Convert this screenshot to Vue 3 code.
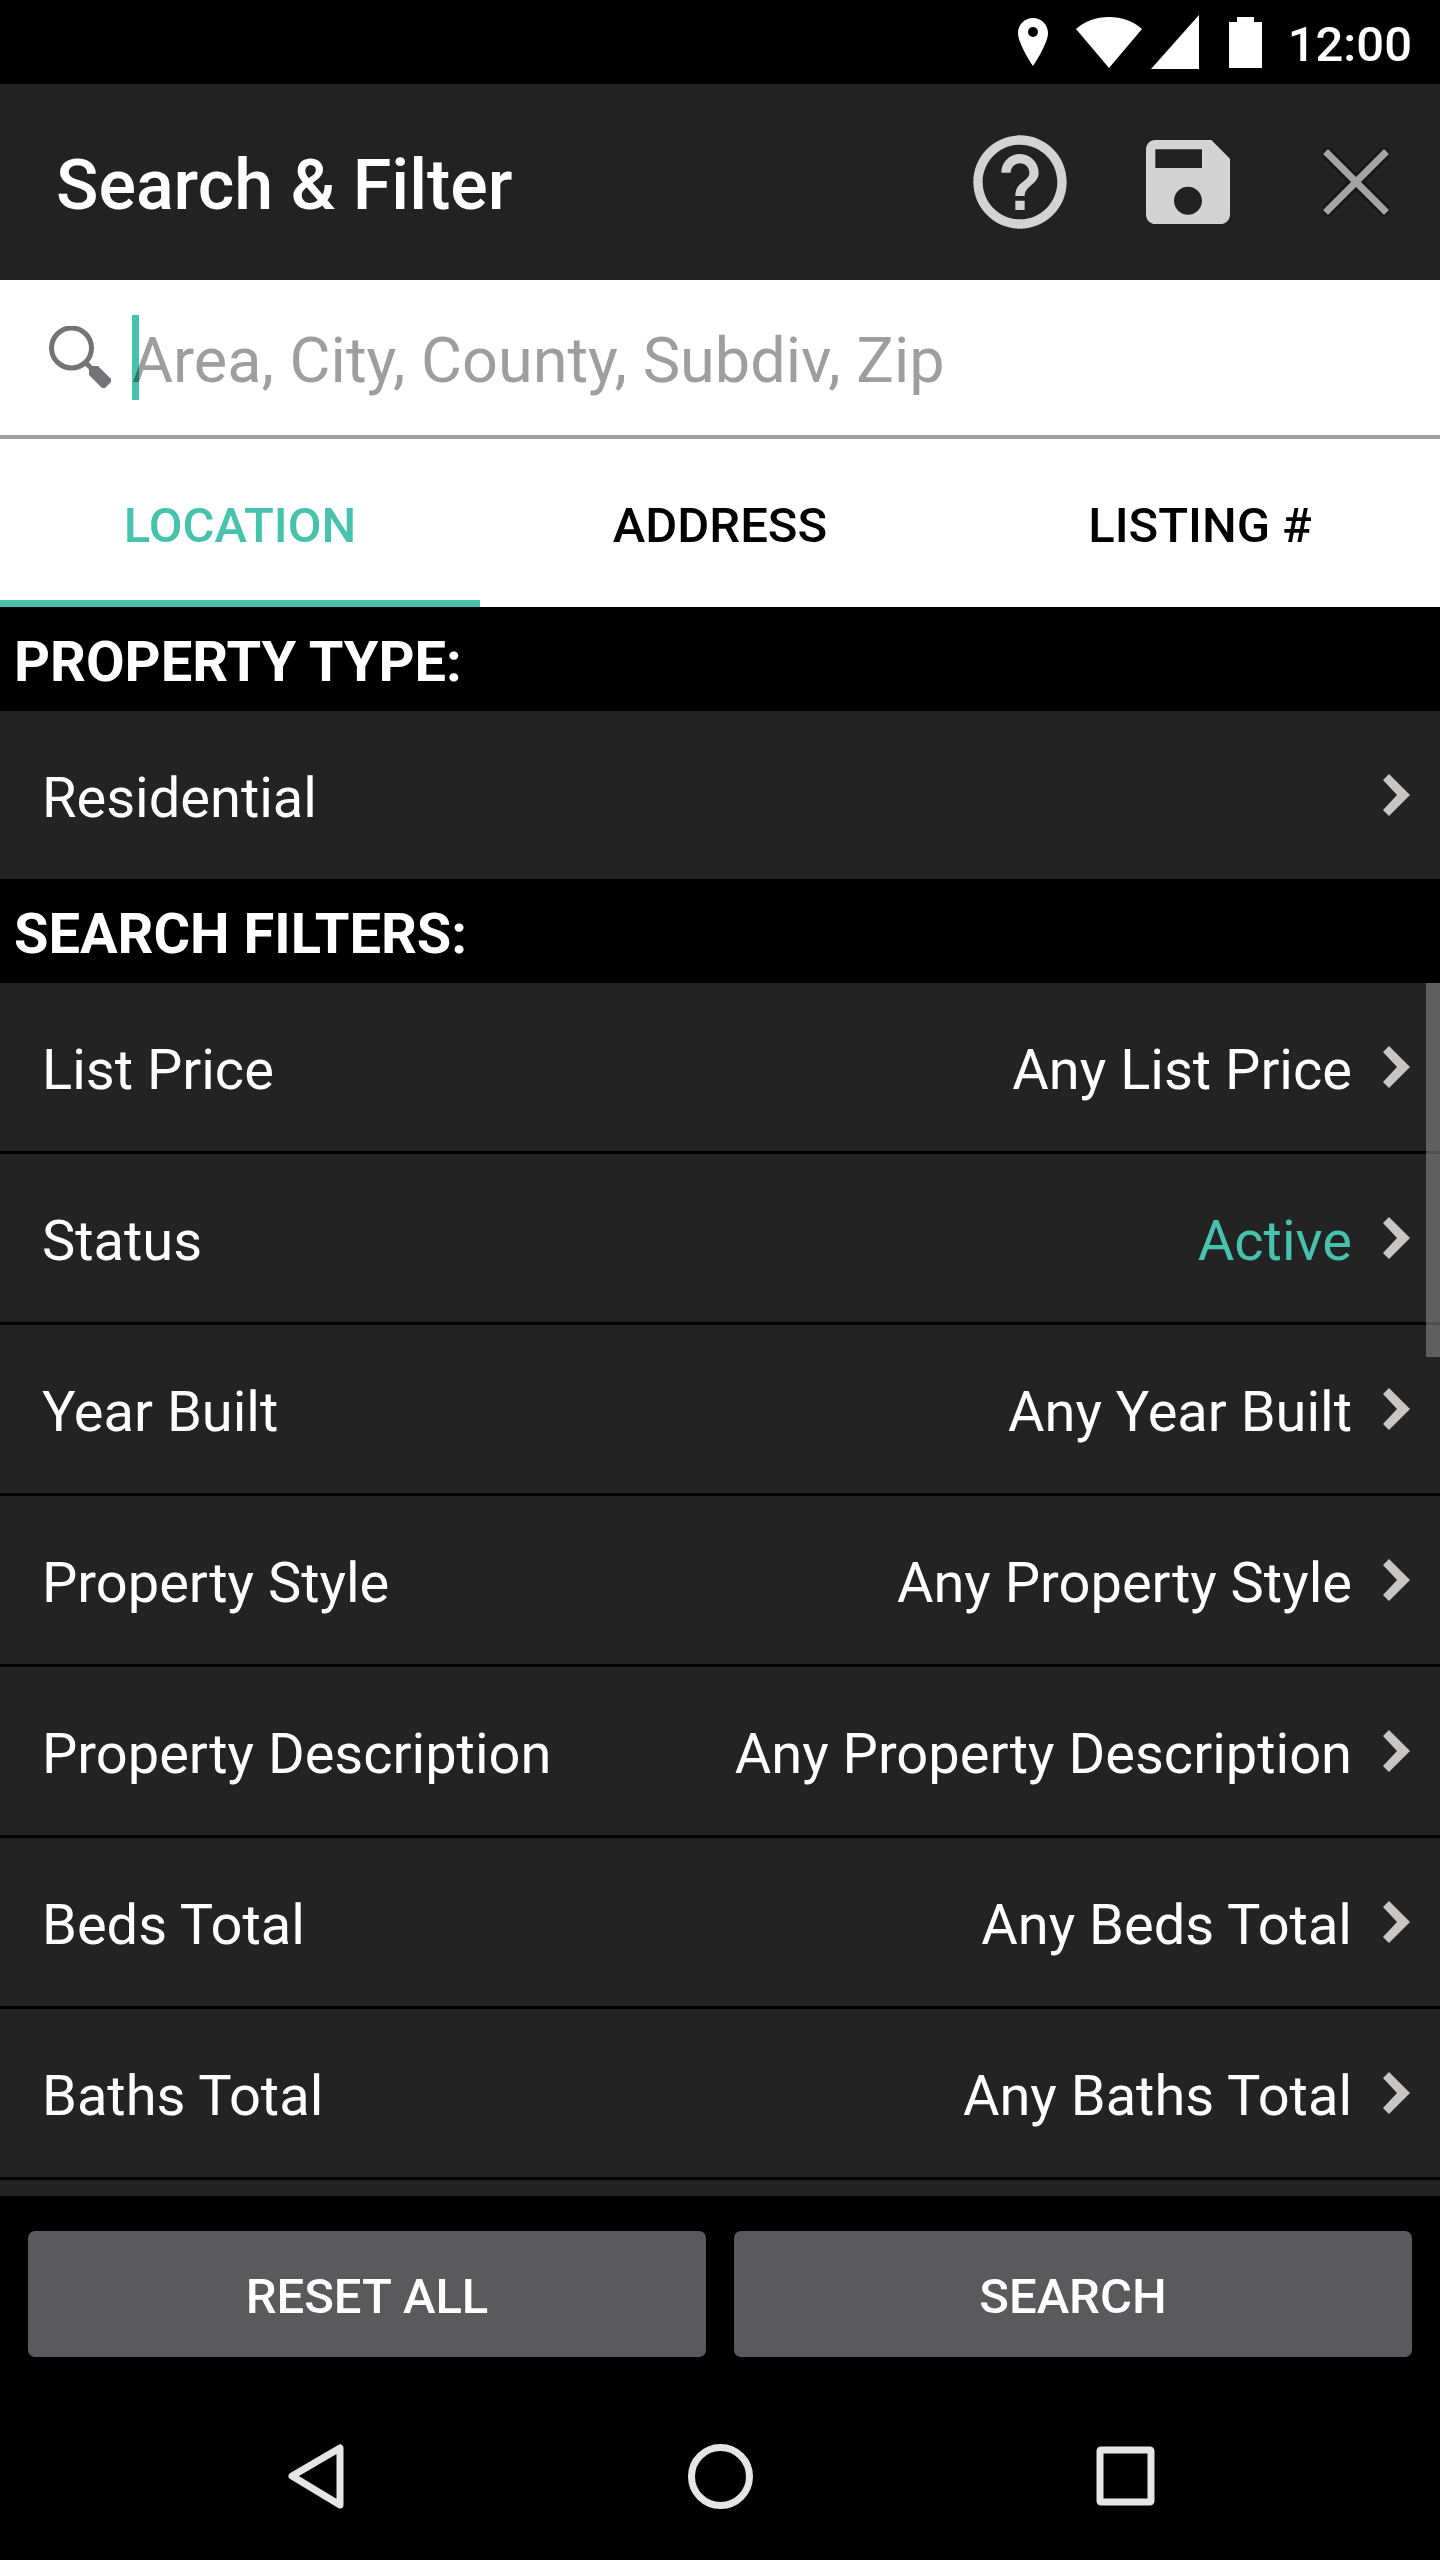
<script setup>
import { ref } from 'vue'

const query = ref('')
const tabs = ['LOCATION', 'ADDRESS', 'LISTING #']
const activeTab = ref('LOCATION')
const filters = [
  { label: 'List Price', value: 'Any List Price' },
  { label: 'Status', value: 'Active', set: true },
  { label: 'Year Built', value: 'Any Year Built' },
  { label: 'Property Style', value: 'Any Property Style' },
  { label: 'Property Description', value: 'Any Property Description' },
  { label: 'Beds Total', value: 'Any Beds Total' },
  { label: 'Baths Total', value: 'Any Baths Total' }
]
</script>

<template>
  <div class="screen">
    <div class="status-bar">
      <svg class="pin" width="30" height="48" viewBox="0 0 30 48">
        <path fill-rule="evenodd" d="M15 0C6.700 0 0 6.700 0 15c0 11 15 33 15 33s15-22 15-33C30 6.700 23.300 0 15 0zm0 9a5 5 0 1 1 0 10 5 5 0 0 1 0-10z" />
      </svg>
      <svg class="wifi" width="66" height="51" viewBox="0 0 66 51">
        <path d="M33 51 0 12C9 4 20 0 33 0s24 4 33 12z" />
      </svg>
      <svg class="signal" width="48" height="54" viewBox="0 0 48 54">
        <path d="M48 0v54H0z" />
      </svg>
      <svg class="battery" width="33" height="51" viewBox="0 0 33 51">
        <path d="M8 0h17v5h8v46H0V5h8z" />
      </svg>
      <time class="clock">12:00</time>
    </div>

    <header class="toolbar">
      <h1 class="title">Search &amp; Filter</h1>
      <button class="tool" type="button" aria-label="Help">
        <svg width="112" height="112" viewBox="0 0 24 24" fill="#d3d3d3">
          <path d="M11 18h2v-2h-2v2zm1-16C6.480 2 2 6.480 2 12s4.480 10 10 10 10-4.480 10-10S17.520 2 12 2zm0 18c-4.410 0-8-3.590-8-8s3.590-8 8-8 8 3.590 8 8-3.590 8-8 8zm0-14c-2.210 0-4 1.790-4 4h2c0-1.100.9-2 2-2s2 .9 2 2c0 2-3 1.750-3 5h2c0-2.250 3-2.500 3-5 0-2.210-1.790-4-4-4z" />
        </svg>
      </button>
      <button class="tool" type="button" aria-label="Save search">
        <svg width="112" height="112" viewBox="0 0 24 24" fill="#d3d3d3">
          <path d="M17 3H5c-1.110 0-2 .9-2 2v14c0 1.100.89 2 2 2h14c1.100 0 2-.9 2-2V7l-4-4zm-5 16c-1.660 0-3-1.340-3-3s1.340-3 3-3 3 1.340 3 3-1.340 3-3 3zm3-10H5V5h10v4z" />
        </svg>
      </button>
      <button class="tool" type="button" aria-label="Close">
        <svg width="112" height="112" viewBox="0 0 112 112" fill="none">
          <path d="M28 28l56 56M84 28 28 84" stroke="#161616" stroke-width="12" stroke-linecap="round" />
          <path d="M28 28l56 56M84 28 28 84" stroke="#a4a4a4" stroke-width="7" stroke-linecap="square" />
        </svg>
      </button>
    </header>

    <div class="search">
      <label class="search-icon" for="query" aria-label="Location search">
        <svg width="64" height="64" viewBox="0 0 64 64" fill="none" stroke="#737378">
          <circle cx="23.500" cy="22" r="20" stroke-width="5" />
          <path d="M37 36l8 8" stroke-width="5" />
          <path d="M41 41l3-1h6l13 13v3l-6 6h-3L41 49z" fill="#737378" stroke="none" />
        </svg>
      </label>
      <div class="field">
        <input id="query" v-model="query" type="text" placeholder="Area, City, County, Subdiv, Zip" />
        <span class="caret"></span>
      </div>
    </div>

    <div class="tabs" role="tablist">
      <button
        v-for="tab in tabs"
        :key="tab"
        class="tab"
        :class="{ active: tab === activeTab }"
        type="button"
        role="tab"
        :aria-selected="tab === activeTab"
        @click="activeTab = tab"
      >{{ tab }}</button>
    </div>

    <h2 class="section">PROPERTY TYPE:</h2>
    <button class="row" type="button">
      <span class="label">Residential</span>
      <svg class="chevron" width="29" height="42" viewBox="0 0 29 42"><path d="M6 0l21 21L6 42l-6-6 14-15L0 6z" /></svg>
    </button>

    <h2 class="section">SEARCH FILTERS:</h2>
    <div class="list-wrap">
      <ul class="list">
        <li v-for="filter in filters" :key="filter.label">
          <button class="row" type="button">
            <span class="label">{{ filter.label }}</span>
            <span class="value" :class="{ set: filter.set }">{{ filter.value }}</span>
            <svg class="chevron" width="29" height="42" viewBox="0 0 29 42"><path d="M6 0l21 21L6 42l-6-6 14-15L0 6z" /></svg>
          </button>
        </li>
      </ul>
      <div class="thumb"></div>
    </div>

    <div class="actions">
      <button class="action" type="button">RESET ALL</button>
      <button class="action" type="button">SEARCH</button>
    </div>

    <nav class="nav-bar">
      <button type="button" aria-label="Back">
        <svg width="66" height="66" viewBox="0 0 66 66"><path d="M58 5v57L10 33z" /></svg>
      </button>
      <button type="button" aria-label="Home">
        <svg width="66" height="66" viewBox="0 0 66 66"><circle cx="33.500" cy="33.500" r="29" /></svg>
      </button>
      <button type="button" aria-label="Recent apps">
        <svg width="66" height="66" viewBox="0 0 66 66"><rect x="8" y="7" width="51" height="52" rx="1" /></svg>
      </button>
    </nav>
  </div>
</template>

<style>
body {
  margin: 0;
  background: #000;
}
</style>

<style scoped>
.screen {
  display: flex;
  flex-direction: column;
  height: 100vh;
  background: #000;
  color: #fff;
  font-family: Roboto, "Noto Sans", sans-serif;
  font-size: 56px;
}
.screen * {
  box-sizing: border-box;
}
button {
  margin: 0;
  padding: 0;
  border: 0;
  background: none;
  color: inherit;
  font: inherit;
}
svg {
  display: block;
  flex: none;
}
h1,
h2,
ul {
  margin: 0;
  padding: 0;
}

.status-bar {
  display: flex;
  flex: none;
  align-items: center;
  justify-content: flex-end;
  height: 84px;
  padding-right: 28px;
  fill: #fff;
}
.wifi {
  margin-left: 28px;
}
.signal {
  margin-left: 9px;
}
.battery {
  margin-left: 30px;
}
.clock {
  margin-left: 26px;
  padding-top: 4px;
  font-size: 49px;
  font-weight: 500;
}

.toolbar {
  display: flex;
  flex: none;
  align-items: center;
  gap: 56px;
  height: 196px;
  padding: 0 28px 0 56px;
  background: #222;
}
.title {
  flex: 1;
  padding-top: 6px;
  font-size: 70px;
  font-weight: 500;
  white-space: nowrap;
}

.search {
  display: flex;
  flex: none;
  align-items: center;
  gap: 20px;
  height: 159px;
  padding: 0 28px 0 48px;
  border-bottom: 4px solid #9e9e9e;
  background: #fff;
}
.field {
  position: relative;
  flex: 1;
}
.field input {
  display: block;
  width: 100%;
  height: 85px;
  padding: 6px 0 0;
  border: 0;
  outline: 0;
  background: transparent;
  color: #000;
  font: inherit;
  font-size: 63px;
}
.field input::placeholder {
  color: #9e9e9e;
  opacity: 1;
}
.caret {
  position: absolute;
  top: 0;
  left: 0;
  width: 7px;
  height: 85px;
  background: #47c2ac;
  mix-blend-mode: multiply;
}

.tabs {
  display: grid;
  flex: none;
  grid-template-columns: repeat(3, 1fr);
  height: 168px;
  background: #fff;
  color: #000;
}
.tab {
  padding-top: 11px;
  border-bottom: 7px solid transparent;
  font-size: 49px;
  font-weight: 500;
}
.tab.active {
  border-color: #47c2ac;
  color: #47c2ac;
}

.section {
  display: flex;
  flex: none;
  align-items: center;
  height: 104px;
  padding: 6px 14px 0;
  font-size: 56px;
  font-weight: 700;
}

.row {
  display: flex;
  flex: none;
  align-items: center;
  width: 100%;
  height: 168px;
  padding: 0 28px 0 42px;
  background: #232323;
  text-align: left;
}
.label {
  flex: 1;
  padding-top: 6px;
}
.value {
  padding-top: 6px;
}
.value.set {
  color: #47c2ac;
}
.chevron {
  margin-left: 31px;
  fill: #c8c6c5;
}

.list-wrap {
  position: relative;
  flex: 1;
  min-height: 0;
}
.list {
  height: 100%;
  overflow-y: auto;
  background: #232323;
  list-style: none;
  scrollbar-width: none;
}
.list li {
  border-bottom: 3px solid #000;
}
.thumb {
  position: absolute;
  top: 0;
  right: 0;
  width: 14px;
  height: 374px;
  background: rgba(142, 142, 142, 0.56);
}

.actions {
  display: grid;
  flex: none;
  grid-template-columns: 1fr 1fr;
  gap: 28px;
  padding: 35px 28px;
}
.action {
  height: 126px;
  padding-top: 4px;
  border-radius: 7px;
  background: #5a5a5c;
  font-size: 49px;
  font-weight: 500;
}

.nav-bar {
  display: grid;
  flex: none;
  grid-template-columns: repeat(3, 1fr);
  height: 168px;
  padding: 0 112px;
}
.nav-bar button {
  display: flex;
  align-items: center;
  justify-content: center;
}
.nav-bar svg {
  fill: none;
  stroke: #e5e5e5;
  stroke-width: 7px;
  stroke-linejoin: round;
}
</style>
